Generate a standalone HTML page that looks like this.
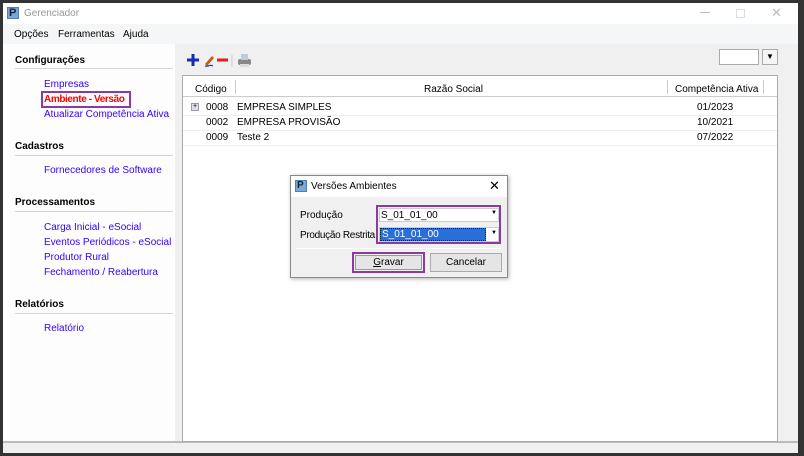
<!DOCTYPE html>
<html><head><meta charset="utf-8"><style>
*{box-sizing:border-box;margin:0;padding:0}
body{width:804px;height:456px;background:#333;position:relative;overflow:hidden;font-family:"Liberation Sans",sans-serif;font-size:10px;color:#000}
.a{position:absolute;white-space:nowrap}
.link{color:#3300ff;font-size:10px}
.hdr{font-weight:bold;font-size:10px}
.sep{height:2px;background:#d4d4d4;border-bottom:1px solid #fff}
</style></head><body>
<div class="a" style="left:3px;top:3px;width:795px;height:450px;background:#f0f0f0"></div>
<div class="a" style="left:3px;top:3px;width:795px;height:21px;background:#fff"></div>
<div class="a" style="left:7px;top:7px;width:12px;height:12px;background:#7aa7d8;border:1px solid #4d7fb8"></div>
<div class="a" style="left:9px;top:7px;color:#123;font-weight:bold;font-size:11px;line-height:12px">P</div>
<div class="a" style="left:24px;top:8px;color:#999;font-size:10px">Gerenciador</div>
<div class="a" style="left:700px;top:12px;width:10px;height:1px;background:#bbb"></div>
<div class="a" style="left:736px;top:9px;width:9px;height:9px;border:1px solid #ddd"></div>
<div class="a" style="left:771px;top:5px;color:#bbb;font-size:13px">✕</div>
<div class="a" style="left:3px;top:24px;width:795px;height:20px;background:#f5f6f7"></div>
<div class="a" style="left:14px;top:29px">Opções</div>
<div class="a" style="left:58px;top:29px">Ferramentas</div>
<div class="a" style="left:123px;top:29px">Ajuda</div>
<div class="a" style="left:3px;top:44px;width:172px;height:397px;background:#fdfdfd"></div>
<div class="a" style="left:3px;top:441px;width:795px;height:2px;background:#bbb"></div>
<div class="a hdr" style="left:15px;top:55px">Configurações</div>
<div class="a sep" style="left:15px;top:68px;width:158px"></div>
<div class="a link" style="left:44px;top:79px">Empresas</div>
<div class="a" style="left:41px;top:91px;width:90px;height:17px;border:2px solid #8b3a9e"></div>
<div class="a" style="left:44px;top:94px;color:#f00;font-weight:bold;letter-spacing:-0.4px">Ambiente - Versão</div>
<div class="a link" style="left:44px;top:109px">Atualizar Competência Ativa</div>
<div class="a hdr" style="left:15px;top:141px">Cadastros</div>
<div class="a sep" style="left:15px;top:155px;width:158px"></div>
<div class="a link" style="left:44px;top:165px">Fornecedores de Software</div>
<div class="a hdr" style="left:15px;top:197px">Processamentos</div>
<div class="a sep" style="left:15px;top:211px;width:158px"></div>
<div class="a link" style="left:44px;top:222px">Carga Inicial - eSocial</div>
<div class="a link" style="left:44px;top:237px">Eventos Periódicos - eSocial</div>
<div class="a link" style="left:44px;top:252px">Produtor Rural</div>
<div class="a link" style="left:44px;top:267px">Fechamento / Reabertura</div>
<div class="a hdr" style="left:15px;top:299px">Relatórios</div>
<div class="a sep" style="left:15px;top:313px;width:158px"></div>
<div class="a link" style="left:44px;top:323px">Relatório</div>
<svg class="a" style="left:186px;top:52px" width="80" height="18">
<path d="M7 2v12M1 8h12" stroke="#1a2bb0" stroke-width="3"/>
<path d="M19 12l7-8 2 2-7 8z" fill="#c85a1a"/><path d="M19 14c3 1 5-2 8 0" stroke="#2244aa" fill="none" stroke-width="1.2"/>
<path d="M31 8h11" stroke="#e0201b" stroke-width="3"/>
<line x1="46" y1="3" x2="46" y2="15" stroke="#ccc"/>
<rect x="52" y="7" width="13" height="6" rx="2" fill="#888"/><rect x="55" y="2" width="7" height="6" fill="#bcd"/><rect x="54" y="12" width="9" height="3" fill="#ddd"/>
</svg>
<div class="a" style="left:719px;top:49px;width:40px;height:16px;background:#fff;border:1px solid #aaa"></div>
<div class="a" style="left:762px;top:49px;width:16px;height:16px;background:#f5f5f5;border:1px solid #aaa;font-size:8px;text-align:center;line-height:14px">▼</div>
<div class="a" style="left:182px;top:75px;width:596px;height:367px;background:#fff;border:1px solid #aaa"></div>
<div class="a" style="left:183px;top:76px;width:594px;height:21px;background:#fff;border-bottom:1px solid #ccc"></div>
<div class="a" style="left:195px;top:84px">Código</div>
<div class="a" style="left:235px;top:80px;width:1px;height:14px;background:#ccc"></div>
<div class="a" style="left:424px;top:84px">Razão Social</div>
<div class="a" style="left:667px;top:80px;width:1px;height:14px;background:#ccc"></div>
<div class="a" style="left:675px;top:84px">Competência Ativa</div>
<div class="a" style="left:763px;top:80px;width:1px;height:14px;background:#ccc"></div>
<div class="a" style="left:183px;top:115px;width:594px;height:1px;background:#eee"></div>
<div class="a" style="left:183px;top:130px;width:594px;height:1px;background:#eee"></div>
<div class="a" style="left:183px;top:145px;width:594px;height:1px;background:#eee"></div>
<div class="a" style="left:191px;top:103px;width:8px;height:8px;border:1px solid #99a;background:#dde;font-size:7px;line-height:6px;text-align:center">+</div>
<div class="a" style="left:206px;top:102px">0008</div><div class="a" style="left:237px;top:102px">EMPRESA SIMPLES</div><div class="a" style="left:697px;top:102px">01/2023</div>
<div class="a" style="left:206px;top:117px">0002</div><div class="a" style="left:237px;top:117px">EMPRESA PROVISÃO</div><div class="a" style="left:697px;top:117px">10/2021</div>
<div class="a" style="left:206px;top:132px">0009</div><div class="a" style="left:237px;top:132px">Teste 2</div><div class="a" style="left:697px;top:132px">07/2022</div>
<div class="a" style="left:290px;top:175px;width:218px;height:103px;background:#f0f0f0;border:1px solid #888;box-shadow:1px 1px 4px rgba(0,0,0,.3)"></div>
<div class="a" style="left:291px;top:176px;width:216px;height:21px;background:#fff"></div>
<div class="a" style="left:295px;top:180px;width:12px;height:12px;background:#7aa7d8;border:1px solid #4d7fb8;font-weight:bold;font-size:10px;line-height:10px;padding-left:1px;color:#123">P</div>
<div class="a" style="left:311px;top:181px">Versões Ambientes</div>
<div class="a" style="left:489px;top:178px;font-size:13px">✕</div>
<div class="a" style="left:300px;top:210px">Produção</div>
<div class="a" style="left:300px;top:230px;letter-spacing:-0.3px">Produção Restrita</div>
<div class="a" style="left:376px;top:205px;width:125px;height:39px;border:2px solid #8b3a9e"></div>
<div class="a" style="left:379px;top:208px;width:120px;height:14px;background:#fff;border:1px solid #ccc"></div>
<div class="a" style="left:381px;top:210px">S_01_01_00</div>
<div class="a" style="left:491px;top:210px;font-size:6px">▼</div>
<div class="a" style="left:379px;top:227px;width:120px;height:15px;background:#fff;border:1px solid #ccc"></div>
<div class="a" style="left:380px;top:228px;width:106px;height:13px;background:#2a6fd8;border:1px dotted #123"></div>
<div class="a" style="left:382px;top:229px;color:#fff">S_01_01_00</div>
<div class="a" style="left:491px;top:230px;font-size:6px">▼</div>
<div class="a" style="left:296px;top:248px;width:205px;height:1px;background:#bbb;border-bottom:1px solid #fff"></div>
<div class="a" style="left:352px;top:252px;width:73px;height:21px;border:2px solid #8b3a9e"></div>
<div class="a" style="left:355px;top:255px;width:67px;height:15px;background:#e5e5e5;border:1px solid #999;text-align:center;line-height:13px"><u>G</u>ravar</div>
<div class="a" style="left:430px;top:253px;width:72px;height:19px;background:#e5e5e5;border:1px solid #aaa;text-align:center;line-height:17px">Cancelar</div>
</body></html>
